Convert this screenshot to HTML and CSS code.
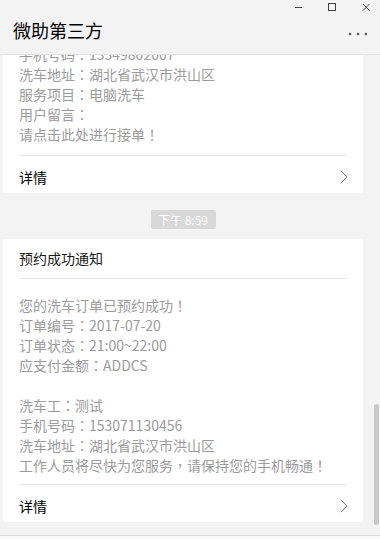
FILE: index.html
```html
<!DOCTYPE html>
<html lang="zh-CN">
<head>
<meta charset="utf-8">
<title>微助第三方</title>
<link rel="stylesheet" href="styles.css">
</head>
<body>
<div class="app">
  <header class="header">
    <div class="winbar">
      <svg class="winctl" width="100" height="12" viewBox="0 0 100 12">
        <line x1="15" y1="7.5" x2="22" y2="7.5" stroke="#444" stroke-width="1"/>
        <rect x="48.5" y="3.5" width="7" height="7" fill="none" stroke="#444" stroke-width="1"/>
        <line x1="83" y1="4" x2="89.5" y2="10.5" stroke="#444" stroke-width="1"/>
        <line x1="89.5" y1="4" x2="83" y2="10.5" stroke="#444" stroke-width="1"/>
      </svg>
    </div>
    <div class="titlebar">
      <h1 class="title">微助第三方</h1>
      <svg class="more" width="20" height="4" viewBox="0 0 20 4">
        <circle cx="3" cy="2" r="1.3" fill="#555"/>
        <circle cx="11" cy="2" r="1.3" fill="#555"/>
        <circle cx="19" cy="2" r="1.3" fill="#555"/>
      </svg>
    </div>
  </header>

  <main class="content">
    <div class="feed">
      <section class="card card-cut">
        <div class="card-body body-cut">
          <p>手机号码<span class="pu" lang="zh-Hant">：</span>13349802007</p>
          <p>洗车地址<span class="pu" lang="zh-Hant">：</span>湖北省武汉市洪山区</p>
          <p>服务项目<span class="pu" lang="zh-Hant">：</span>电脑洗车</p>
          <p>用户留言<span class="pu" lang="zh-Hant">：</span></p>
          <p>请点击此处进行接单<span class="pu" lang="zh-Hant">！</span></p>
        </div>
        <div class="card-foot">
          <span>详情</span>
          <svg class="chev" width="8" height="14" viewBox="0 0 8 14"><polyline points="0.8,0.8 7,7 0.8,13.2" fill="none" stroke="#777" stroke-width="1"/></svg>
        </div>
      </section>

      <div class="time-row"><span class="time">下午 8:59</span></div>

      <section class="card">
        <div class="card-head">预约成功通知</div>
        <div class="card-body body-full">
          <p>您的洗车订单已预约成功<span class="pu" lang="zh-Hant">！</span></p>
          <p>订单编号<span class="pu" lang="zh-Hant">：</span>2017-07-20</p>
          <p>订单状态<span class="pu" lang="zh-Hant">：</span>21:00~22:00</p>
          <p>应支付金额<span class="pu" lang="zh-Hant">：</span>ADDCS</p>
          <p class="blank">&nbsp;</p>
          <p>洗车工<span class="pu" lang="zh-Hant">：</span>测试</p>
          <p>手机号码<span class="pu" lang="zh-Hant">：</span>153071130456</p>
          <p>洗车地址<span class="pu" lang="zh-Hant">：</span>湖北省武汉市洪山区</p>
          <p>工作人员将尽快为您服务<span class="pu" lang="zh-Hant">，</span>请保持您的手机畅通<span class="pu" lang="zh-Hant">！</span></p>
        </div>
        <div class="card-foot">
          <span>详情</span>
          <svg class="chev" width="8" height="14" viewBox="0 0 8 14"><polyline points="0.8,0.8 7,7 0.8,13.2" fill="none" stroke="#777" stroke-width="1"/></svg>
        </div>
      </section>
    </div>
    <div class="scrolltrack"><div class="thumb"></div></div>
  </main>

  <footer class="footer"></footer>
</div>
</body>
</html>
```

FILE: styles.css
```css
* { box-sizing: border-box; }
html, body { margin: 0; padding: 0; }
body {
  background: #f3f3f3;
  font-family: "Noto Sans CJK SC", "Noto Sans", sans-serif;
  color: #111;
}
.app {
  width: 380px;
  height: 539px;
  display: flex;
  flex-direction: column;
  overflow: hidden;
}
.header {
  height: 55px;
  flex: none;
  background: #f3f3f3;
  border-bottom: 1px solid #e3e3e3;
  position: relative;
  z-index: 2;
}
.winbar {
  height: 12px;
  display: flex;
  justify-content: flex-end;
}
.winctl { display: block; }
.titlebar {
  display: flex;
  justify-content: space-between;
  align-items: flex-start;
  padding: 6px 13px 0 13px;
}
.title {
  margin: 0;
  font-size: 18px;
  font-weight: normal;
  line-height: 24px;
  color: #000;
}
.more {
  display: block;
  margin-top: 14px;
}
.content {
  flex: 1;
  display: flex;
  overflow: hidden;
}
.feed {
  width: 360px;
  margin-left: 3px;
  flex: none;
}
.card {
  background: #fff;
  border-radius: 3px;
}
.card-cut { border-radius: 0 0 3px 3px; }
.card-body {
  margin: 0 16px;
  border-bottom: 1px solid #e7e7e7;
}
.card-body p {
  margin: 0;
  font-size: 14px;
  line-height: 20px;
  color: #9b9b9b;
  white-space: nowrap;
}
.pu {
  font-family: "Noto Sans CJK TC", "Noto Sans CJK SC", sans-serif;
}
.body-cut {
  margin-top: -11px;
  padding-bottom: 11px;
}
.body-full {
  border-top: 1px solid #e7e7e7;
  padding-top: 16px;
  padding-bottom: 9px;
}
.card-head {
  padding: 9px 16px 10px 16px;
  font-size: 14px;
  line-height: 20px;
  color: #1a1a1a;
}
.card-foot {
  display: flex;
  justify-content: space-between;
  align-items: center;
  padding: 11px 15px 6px 16px;
  font-size: 14px;
  line-height: 20px;
  color: #000;
}
.chev { display: block; }
.time-row {
  display: flex;
  justify-content: center;
  padding: 17px 0 10px 0;
}
.time {
  display: inline-block;
  width: 65px;
  height: 19px;
  line-height: 19px;
  text-align: center;
  background: #d8d8d8;
  color: #fff;
  font-size: 12px;
  border-radius: 2px;
}
.scrolltrack {
  flex: none;
  width: 5px;
  margin-left: 11px;
  padding-top: 349px;
}
.thumb {
  width: 5px;
  height: 121px;
  background: #c9c9c9;
  border-radius: 3px;
}
.footer {
  height: 4px;
  flex: none;
  border-top: 1px solid #dcdcdc;
  background: #f8f8f8;
}
```
